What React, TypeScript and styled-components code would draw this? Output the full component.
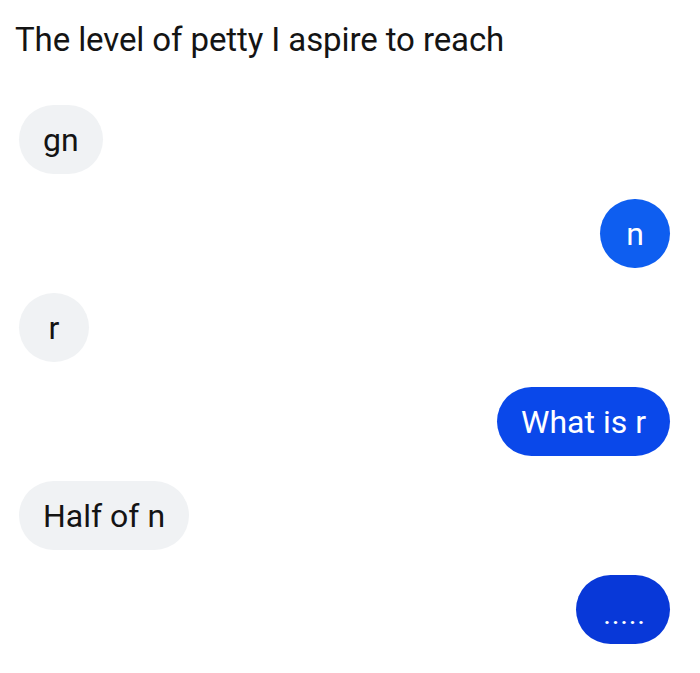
import React from "react";
import styled, { createGlobalStyle } from "styled-components";

const GlobalStyle = createGlobalStyle`
  html, body {
    margin: 0;
    padding: 0;
    background: #ffffff;
  }
  body {
    font-family: Roboto, "Noto Sans", "Liberation Sans", sans-serif;
    -webkit-font-smoothing: antialiased;
  }
`;

const Page = styled.div`
  width: 700px;
  height: 673px;
  box-sizing: border-box;
  padding: 20px 30px 0 15px;
  display: flex;
  flex-direction: column;
  background: #ffffff;
`;

const Title = styled.h1`
  margin: 0 0 45px 0;
  font-size: 33px;
  line-height: 40px;
  font-weight: 400;
  color: #141414;
  letter-spacing: -0.1px;
`;

const Thread = styled.div`
  display: flex;
  flex-direction: column;
  gap: 25px;
`;

const Row = styled.div<{ $mine?: boolean }>`
  display: flex;
  justify-content: ${(p) => (p.$mine ? "flex-end" : "flex-start")};
  padding-left: 4px;
`;

const Bubble = styled.div<{ $bg: string; $fg: string }>`
  box-sizing: border-box;
  height: 69px;
  min-width: 70px;
  padding: 0 24px;
  border-radius: 35px;
  display: flex;
  align-items: center;
  justify-content: center;
  background: ${(p) => p.$bg};
  color: ${(p) => p.$fg};
  font-size: 32px;
  line-height: 1;
  white-space: nowrap;
`;

const Dots = styled.span`
  font-size: 21px;
  letter-spacing: 2.4px;
  margin-right: -2.4px;
  padding: 0 2px 0 4px;
  font-weight: 700;
  transform: translateY(8px);
`;

const GREY = "#f0f2f4";
const INK = "#141414";

type Msg = { text: React.ReactNode; mine?: boolean; bg?: string };

const messages: Msg[] = [
  { text: "gn" },
  { text: "n", mine: true, bg: "#0e5ef0" },
  { text: "r" },
  { text: "What is r", mine: true, bg: "#0a48ea" },
  { text: "Half of n" },
  { text: <Dots>.....</Dots>, mine: true, bg: "#0838d8" },
];

export default function App() {
  return (
    <>
      <GlobalStyle />
      <Page>
        <Title>The level of petty I aspire to reach</Title>
        <Thread>
          {messages.map((m, i) => (
            <Row key={i} $mine={m.mine}>
              <Bubble $bg={m.mine ? m.bg! : GREY} $fg={m.mine ? "#ffffff" : INK}>
                {m.text}
              </Bubble>
            </Row>
          ))}
        </Thread>
      </Page>
    </>
  );
}
